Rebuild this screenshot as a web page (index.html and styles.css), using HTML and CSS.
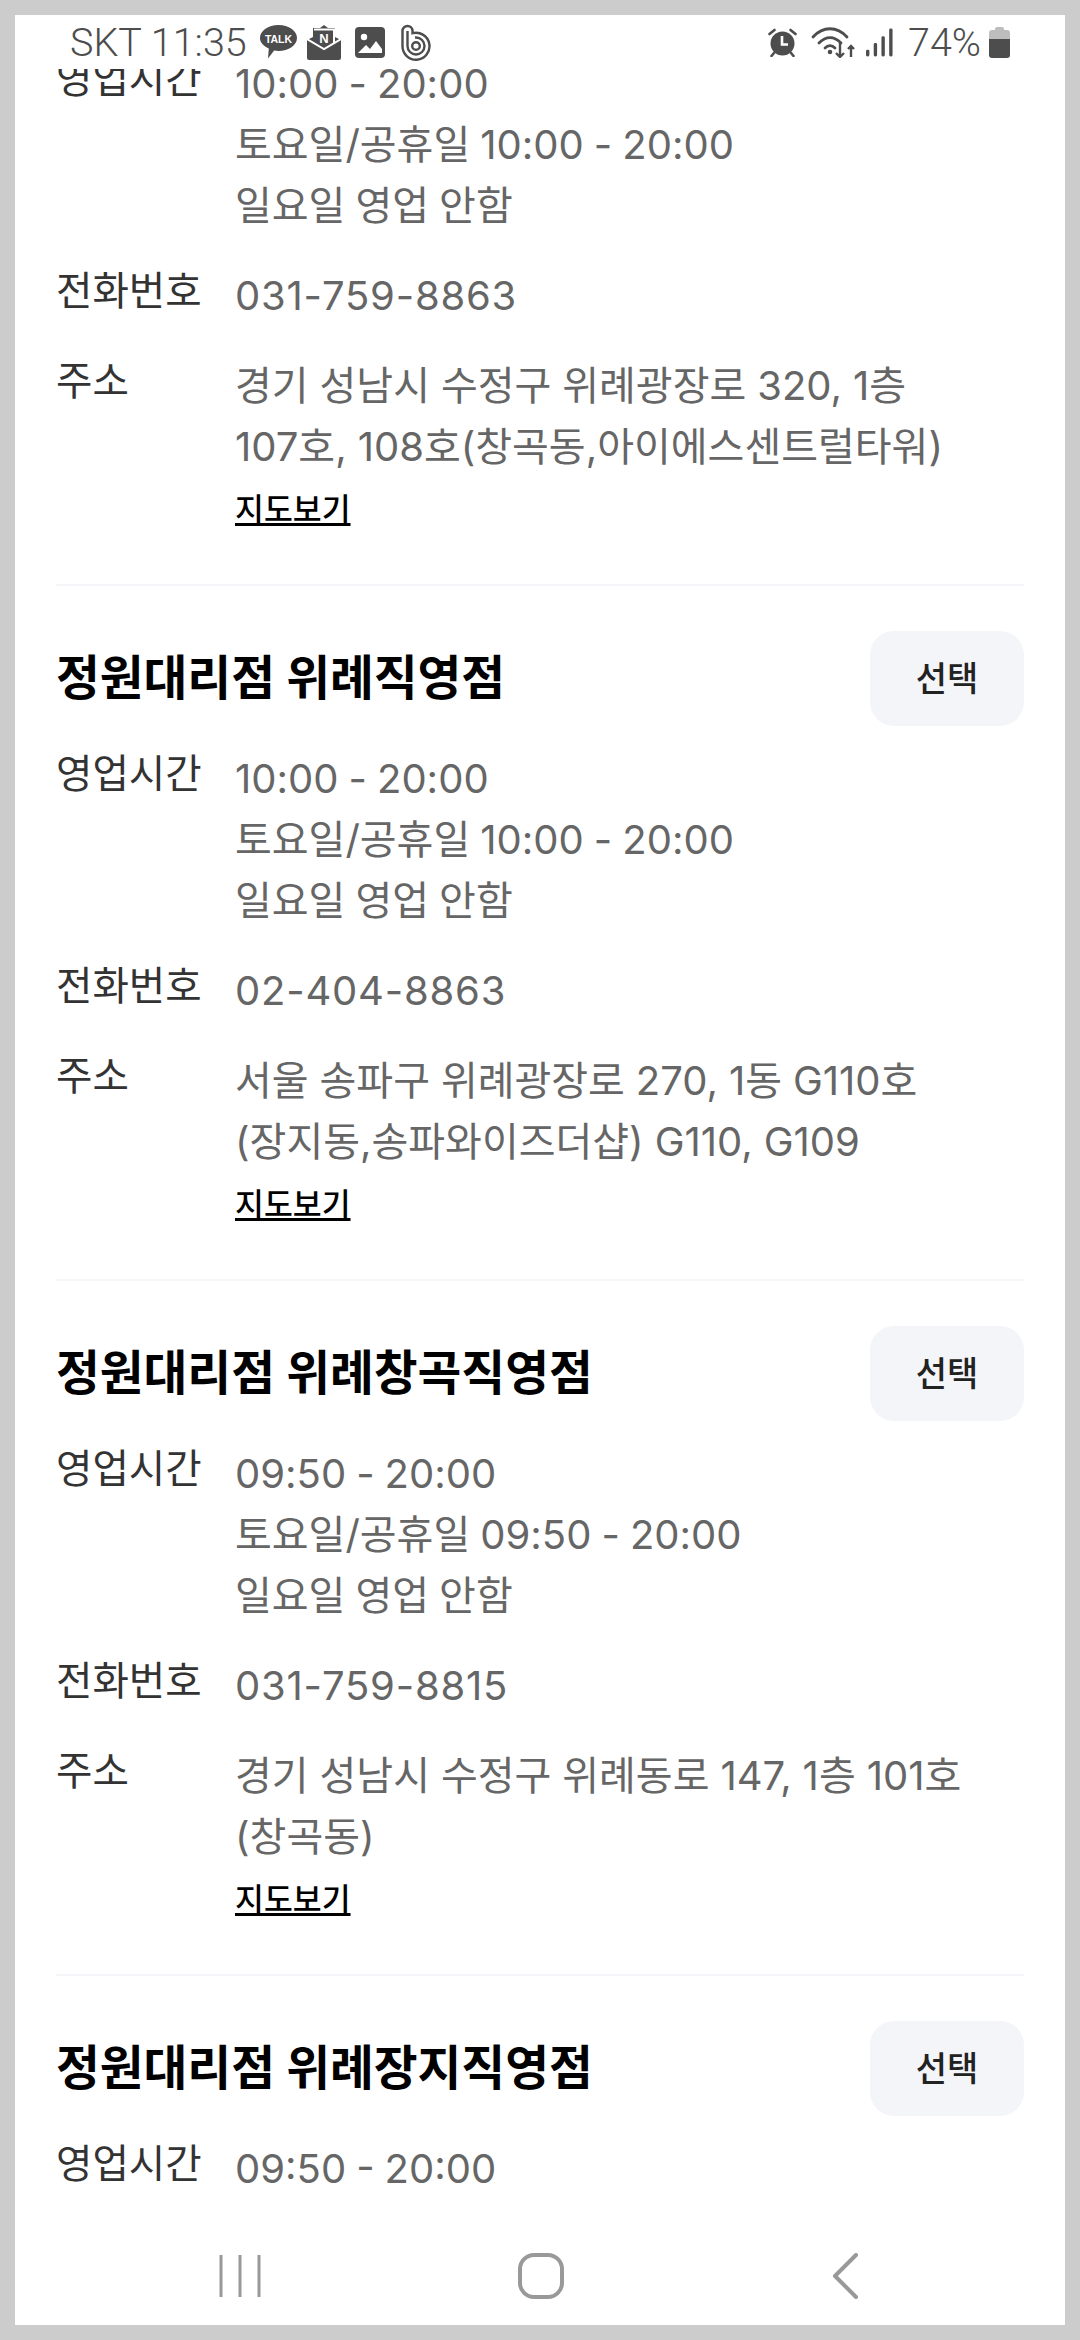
FILE: index.html
```html
<!DOCTYPE html>
<html lang="ko">
<head>
<meta charset="utf-8">
<title>정원대리점</title>
<link rel="stylesheet" href="styles.css">
</head>
<body>
<div class="screen">
  <div class="statusbar">
    <div class="status-left">
      <span class="status-text">SKT 11:35</span>
      <svg class="ic ic-talk" viewBox="0 0 37 34"><path fill="#4d4d4d" d="M18.500 0C28.700 0 37 5.700 37 13S28.700 26 18.500 26c-1.500 0-3-.1-4.400-.4L8 33.500l.8-10C3.500 21.200 0 17.500 0 13 0 5.700 8.300 0 18.500 0z"/><text x="18.500" y="17.500" text-anchor="middle" class="talk-label">TALK</text></svg>
      <svg class="ic ic-mail" viewBox="0 0 34 35"><path fill="#4d4d4d" d="M17 0l4 3h7v9l6 3v18a2 2 0 0 1-2 2H2a2 2 0 0 1-2-2V15l6-3V3h7z"/><path fill="none" stroke="#fff" stroke-width="2" d="M0 14l17 10 17-10"/><path fill="none" stroke="#fff" stroke-width="2" d="M7 4.500h20v14"/><text x="17" y="18" text-anchor="middle" class="mail-label">N</text></svg>
      <svg class="ic ic-image" viewBox="0 0 30 31"><rect width="30" height="31" rx="4" fill="#4d4d4d"/><circle cx="9" cy="10" r="3.200" fill="#fff"/><path fill="#fff" d="M3 26l8-8 4 4 6-8 6 8v4z"/></svg>
      <svg class="ic ic-b" viewBox="0 0 30 37"><g fill="none" stroke="#4d4d4d" stroke-width="2.400"><path d="M1.500 7a5 5 0 0 1 10 0v2.200A13.500 13.500 0 1 1 1.500 22z"/><path d="M6.500 7v15A8.500 8.500 0 1 0 15 13.500h-1"/><circle cx="15" cy="22" r="3.800"/></g></svg>
    </div>
    <div class="status-right">
      <svg class="ic ic-alarm" viewBox="0 0 29 29"><circle cx="14.500" cy="15.500" r="12" fill="#4d4d4d"/><path fill="none" stroke="#fff" stroke-width="2.600" d="M14 8v8.500h6"/><path fill="none" stroke="#4d4d4d" stroke-width="2.600" stroke-linecap="round" d="M1.500 6l5-4M27.500 6l-5-4M6 25l-2.500 3M23 25l2.500 3"/></svg>
      <svg class="ic ic-wifi" viewBox="0 0 45 32"><g fill="none" stroke="#4d4d4d" stroke-width="2.800" stroke-linecap="round"><path d="M2 11C12 0 26 0 36 11"/><path d="M8 17c7-7 15-7 22 0"/><path d="M14 22c3-3 7-3 10 0"/></g><circle cx="19" cy="26" r="2.300" fill="#4d4d4d"/><path fill="none" stroke="#4d4d4d" stroke-width="2.400" d="M29 17v14M25 27l4 4 4-4M40 31V20M37 23l3-3 3 3"/></svg>
      <svg class="ic ic-signal" viewBox="0 0 29 29"><g fill="#4d4d4d"><rect x="0" y="22" width="3.500" height="7" rx="1.500"/><rect x="8" y="15" width="3.500" height="14" rx="1.500"/><rect x="16" y="8" width="3.500" height="21" rx="1.500"/><rect x="24" y="0" width="3.500" height="29" rx="1.500"/></g></svg>
      <span class="status-text status-pct">74%</span>
      <svg class="ic ic-battery" viewBox="0 0 21 31"><path fill="#bdbdbd" d="M6 2a2 2 0 0 1 2-2h5a2 2 0 0 1 2 2v1h3a3 3 0 0 1 3 3v6H0V6a3 3 0 0 1 3-3h3z"/><path fill="#4d4d4d" d="M0 12h21v16a3 3 0 0 1-3 3H3a3 3 0 0 1-3-3z"/></svg>
    </div>
  </div>

  <div class="content">
    <div class="list">
      <section class="store store-cut">
        <dl class="row">
          <dt>영업시간</dt>
          <dd>10:00 - 20:00<br>토요일/공휴일 10:00 - 20:00<br>일요일 영업 안함</dd>
        </dl>
        <dl class="row">
          <dt>전화번호</dt>
          <dd class="tel">031-759-8863</dd>
        </dl>
        <dl class="row">
          <dt>주소</dt>
          <dd class="addr">경기 성남시 수정구 위례광장로 320, 1층<br>107호, 108호(창곡동,아이에스센트럴타워)<a class="map-link" href="#">지도보기</a></dd>
        </dl>
      </section>
      <section class="store">
        <div class="store-head">
          <h2 class="store-name">정원대리점 위례직영점</h2>
          <button class="select-btn">선택</button>
        </div>
        <dl class="row">
          <dt>영업시간</dt>
          <dd>10:00 - 20:00<br>토요일/공휴일 10:00 - 20:00<br>일요일 영업 안함</dd>
        </dl>
        <dl class="row">
          <dt>전화번호</dt>
          <dd class="tel">02-404-8863</dd>
        </dl>
        <dl class="row">
          <dt>주소</dt>
          <dd class="addr">서울 송파구 위례광장로 270, 1동 G110호<br>(장지동,송파와이즈더샵) G110, G109<a class="map-link" href="#">지도보기</a></dd>
        </dl>
      </section>
      <section class="store">
        <div class="store-head">
          <h2 class="store-name">정원대리점 위례창곡직영점</h2>
          <button class="select-btn">선택</button>
        </div>
        <dl class="row">
          <dt>영업시간</dt>
          <dd>09:50 - 20:00<br>토요일/공휴일 09:50 - 20:00<br>일요일 영업 안함</dd>
        </dl>
        <dl class="row">
          <dt>전화번호</dt>
          <dd class="tel">031-759-8815</dd>
        </dl>
        <dl class="row">
          <dt>주소</dt>
          <dd class="addr">경기 성남시 수정구 위례동로 147, 1층 101호<br>(창곡동)<a class="map-link" href="#">지도보기</a></dd>
        </dl>
      </section>
      <section class="store">
        <div class="store-head">
          <h2 class="store-name">정원대리점 위례장지직영점</h2>
          <button class="select-btn">선택</button>
        </div>
        <dl class="row">
          <dt>영업시간</dt>
          <dd>09:50 - 20:00</dd>
        </dl>
      </section>
    </div>
  </div>

  <div class="navbar">
    <svg class="nav-ic nav-recent" viewBox="0 0 44 44"><path fill="none" stroke="#999" stroke-width="3" d="M3 1v42M22 1v42M41 1v42"/></svg>
    <svg class="nav-ic nav-home" viewBox="0 0 46 46"><rect x="2" y="2" width="42" height="42" rx="14" fill="none" stroke="#999" stroke-width="4"/></svg>
    <svg class="nav-ic nav-back" viewBox="0 0 30 46"><path fill="none" stroke="#999" stroke-width="4" stroke-linecap="round" stroke-linejoin="round" d="M26 2L5 23l21 21"/></svg>
  </div>
</div>
</body>
</html>
```

FILE: styles.css
```css
* {
	box-sizing: border-box;
}
html, body {
	margin: 0;
	padding: 0;
}
body {
	width: 1080px;
	height: 2340px;
	padding: 15px;
	background-color: #ccc;
	font-family: Inter, "Noto Sans CJK KR", sans-serif;
}
.screen {
	display: flex;
	flex-direction: column;
	height: 2310px;
	background-color: #fff;
	overflow: hidden;
}

/* status bar */
.statusbar {
	display: flex;
	justify-content: space-between;
	align-items: center;
	flex: none;
	height: 54px;
	padding: 0 55px;
	position: relative;
	z-index: 1;
	background-color: #fff;
}
.status-left, .status-right {
	display: flex;
	align-items: center;
}
.status-text {
	font-family: Roboto, sans-serif;
	font-weight: 300;
	font-size: 39.5px;
	color: #4d4d4d;
}
.ic {
	display: block;
	flex: none;
}
.talk-label {
	font: bold 10.5px "Liberation Sans", sans-serif;
	fill: #fff;
}
.mail-label {
	font: bold 13px "Liberation Sans", sans-serif;
	fill: #fff;
}
.ic-talk {
	width: 37px;
	height: 34px;
	margin-left: 13px;
}
.ic-mail {
	width: 34px;
	height: 35px;
	margin-left: 10px;
}
.ic-image {
	width: 30px;
	height: 31px;
	margin-left: 14px;
}
.ic-b {
	width: 30px;
	height: 37px;
	margin-left: 16px;
}
.ic-alarm {
	width: 29px;
	height: 29px;
}
.ic-wifi {
	width: 45px;
	height: 32px;
	margin-left: 14px;
}
.ic-signal {
	width: 28px;
	height: 29px;
	margin-left: 10px;
}
.status-pct {
	margin-left: 14px;
}
.ic-battery {
	width: 21px;
	height: 31px;
	margin-left: 8px;
}

/* store list, scrolled part way */
.content {
	flex: 1;
	min-height: 0;
	overflow: hidden;
}
.list {
	margin-top: -16px;
}
.store {
	margin: 0 41px;
	padding-top: 45px;
	height: 695px;
	border-bottom: 2px solid #f6f6fa;
}
.store-cut {
	padding-top: 0;
	height: 533px;
}
.store-head {
	display: flex;
	justify-content: space-between;
	align-items: center;
	height: 95px;
	margin-bottom: 22px;
}
.store-name {
	margin: 0;
	padding-bottom: 8px;
	font-size: 47.6px;
	font-weight: 700;
	color: #000;
}
.select-btn {
	width: 154px;
	height: 95px;
	padding: 0 0 4px;
	border: none;
	border-radius: 24px;
	background-color: #f4f5f9;
	font-family: inherit;
	font-size: 34px;
	font-weight: 500;
	color: #222;
}
.row {
	display: flex;
	margin: 0 0 29px;
}
.row dt {
	flex: none;
	width: 179px;
	font-size: 39.6px;
	line-height: 52px;
	color: #333;
}
.row dd {
	margin: 0;
	font-size: 40px;
	line-height: 61px;
	word-spacing: -1.2px;
	color: #666;
}
.row .tel {
	letter-spacing: 0.8px;
}
.row .addr {
	word-spacing: -0.3px;
}
.map-link {
	display: block;
	margin-top: 3px;
	font-size: 31.4px;
	font-weight: 500;
	line-height: 61px;
	color: #000;
	text-decoration: underline;
}

/* bottom nav */
.navbar {
	display: flex;
	align-items: center;
	flex: none;
	height: 120px;
	padding: 22px 0 0 203px;
	gap: 256px;
	background-color: #fff;
}
.nav-ic {
	display: block;
	flex: none;
}
.nav-recent {
	width: 44px;
	height: 44px;
}
.nav-home {
	width: 46px;
	height: 46px;
}
.nav-back {
	width: 30px;
	height: 46px;
	margin-left: 10px;
}
```
